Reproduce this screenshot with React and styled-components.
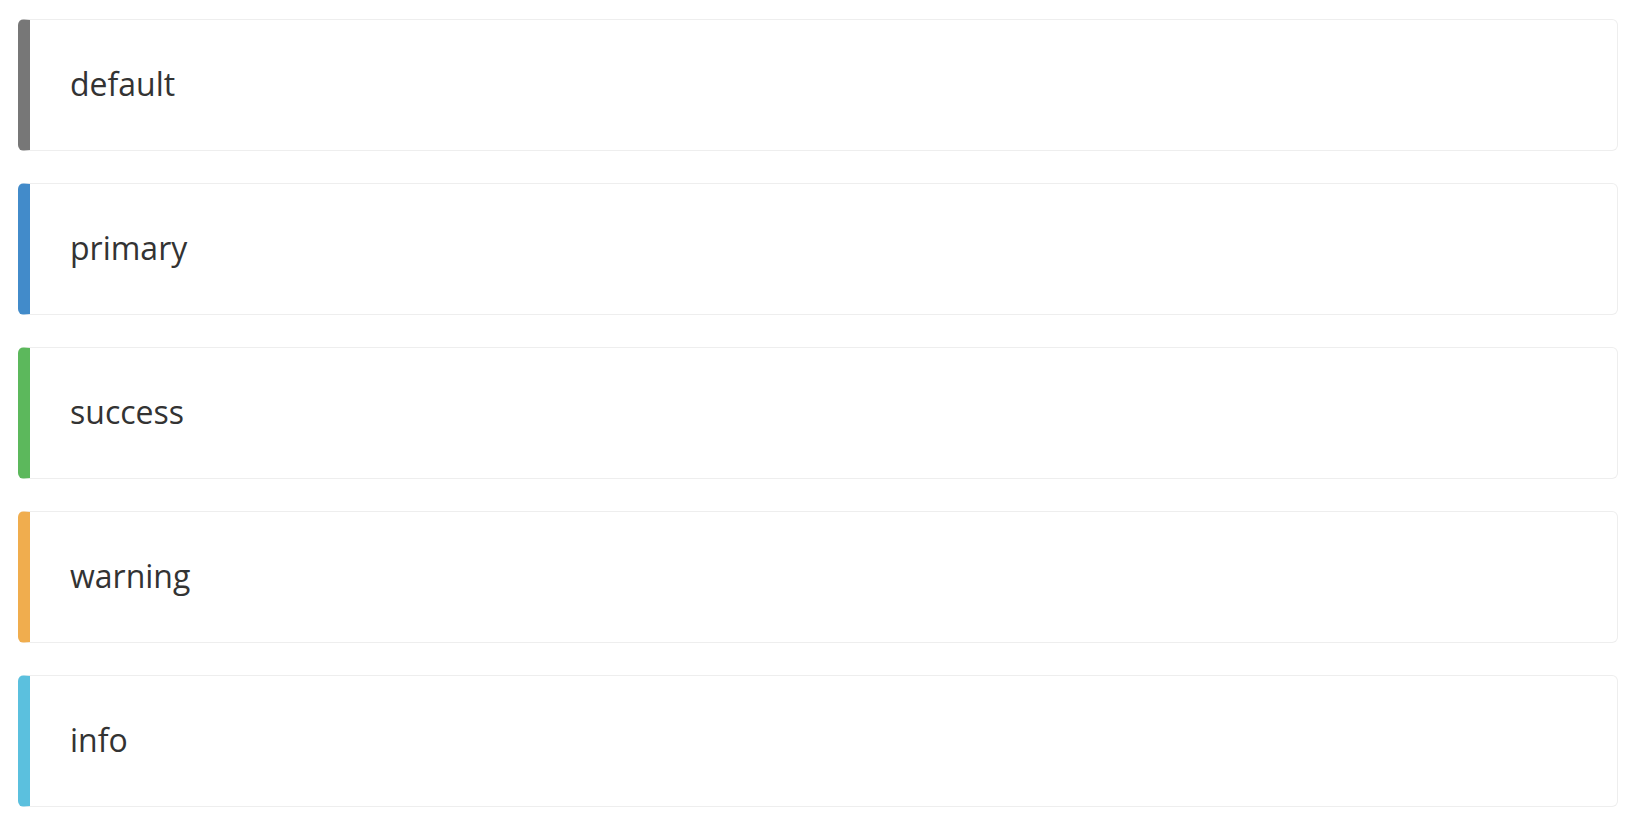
import React from "react";
import styled, { createGlobalStyle } from "styled-components";

const Global = createGlobalStyle`
  html, body { margin: 0; padding: 0; background: #fff; }
  body { font-family: "Open Sans", "Noto Sans", sans-serif; color: #333; }
`;

const Wrapper = styled.div`
  padding: 19px 20px 0 18px;
  display: flex;
  flex-direction: column;
  gap: 32px;
`;

const Callout = styled.div`
  box-sizing: border-box;
  height: 132px;
  display: flex;
  align-items: center;
  padding: 0 40px 2px;
  border: 1px solid #eee;
  border-left: 12px solid ${(p) => p.$color};
  border-radius: 6px;
  background: #fff;
`;

const Label = styled.span`
  font-size: 32px;
  color: #333;
  line-height: 1;
`;

const items = [
  ["default", "#777777"],
  ["primary", "#428bca"],
  ["success", "#5cb85c"],
  ["warning", "#f0ad4e"],
  ["info", "#5bc0de"],
];

export default function App() {
  return (
    <>
      <Global />
      <Wrapper>
        {items.map(([name, color]) => (
          <Callout key={name} $color={color}>
            <Label>{name}</Label>
          </Callout>
        ))}
      </Wrapper>
    </>
  );
}
